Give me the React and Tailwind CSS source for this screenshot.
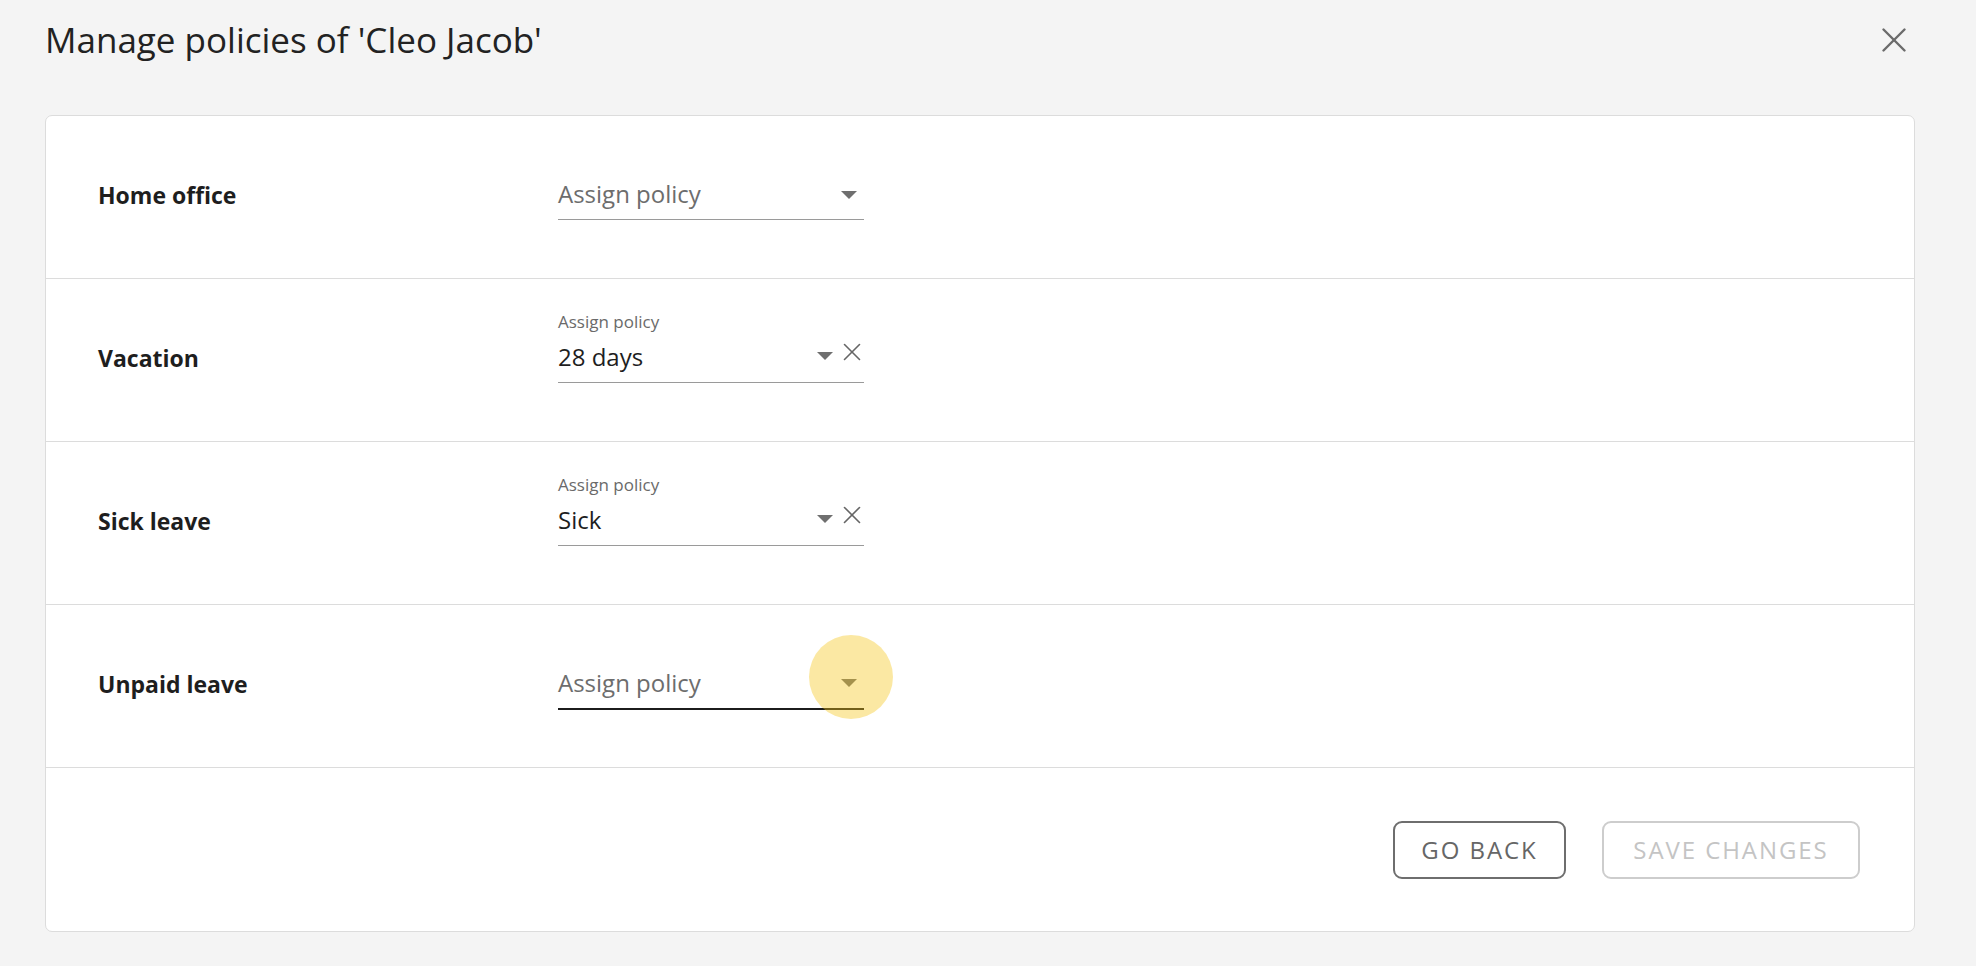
import { X } from 'lucide-react'

const rows = [
  { id: 'home', label: 'Home office', value: '' },
  { id: 'vacation', label: 'Vacation', value: '28 days' },
  { id: 'sick', label: 'Sick leave', value: 'Sick' },
  { id: 'unpaid', label: 'Unpaid leave', value: '', focused: true },
]

function Caret({ className = '' }) {
  return (
    <svg width="16" height="8" viewBox="0 0 16 8" className={className}>
      <path d="M0 0 L16 0 L8 8 Z" fill="#6f6f6f" />
    </svg>
  )
}

function PolicySelect({ value, focused }) {
  return (
    <div
      className={`relative w-[306px] mt-[3px] ${focused ? 'border-b-2 border-[#1c1c1c]' : 'border-b border-[#9a9a9a]'}`}
    >
      {value && (
        <div className="absolute left-0 -top-[30px] text-[17px] leading-[24px] text-[#6a6a6a]">
          Assign policy
        </div>
      )}
      <div className="flex items-center h-[34px] mb-[8px]">
        <div className={`flex-1 text-[24px] leading-[34px] ${value ? 'text-[#1e1e1e]' : 'text-[#6d6d6d]'}`}>
          {value || 'Assign policy'}
        </div>
        {value ? (
          <div className="flex items-center gap-[4px] -mr-[3px]">
            <Caret className="mt-[-2px]" />
            <X size={30} strokeWidth={1.3} className="text-[#666] -mt-[10px]" />
          </div>
        ) : (
          <Caret className="mr-[7px] mt-[1px]" />
        )}
      </div>
      {focused && (
        <div className="absolute right-[-29px] top-[-31px] w-[84px] h-[84px] rounded-full bg-[#f5c518]/40" />
      )}
    </div>
  )
}

export default function App() {
  return (
    <div className="min-h-screen bg-[#f4f4f4] pl-[45px] pr-[61px] pb-[35px] font-['Open_Sans','Noto_Sans',sans-serif]">
      <div className="h-[80px] flex items-center justify-between">
        <h1 className="text-[35px] text-[#222] font-normal leading-none -mt-[2px]">
          Manage policies of 'Cleo Jacob'
        </h1>
        <button className="mr-[0px] text-[#6b6b6b]">
          <X size={42} strokeWidth={1.4} />
        </button>
      </div>

      <div className="mt-[35px] bg-white border border-[#dcdcdc] rounded-[7px]">
        {rows.map((row) => (
          <div key={row.id} className="h-[163px] border-b border-[#dcdcdc] flex items-center pl-[52px]">
            <div className="w-[460px] text-[23px] font-bold text-[#1e1e1e] -mt-[4px]">{row.label}</div>
            <PolicySelect value={row.value} focused={row.focused} />
          </div>
        ))}
        <div className="h-[163px] flex items-center justify-end gap-[36px] pr-[54px]">
          <button className="h-[58px] w-[173px] rounded-[9px] border-2 border-[#6e6e6e] text-[24px] tracking-[0.08em] text-[#666]">
            GO BACK
          </button>
          <button className="h-[58px] w-[258px] rounded-[9px] border-2 border-[#cdcdcd] text-[24px] tracking-[0.08em] text-[#c4c4c4]">
            SAVE CHANGES
          </button>
        </div>
      </div>
    </div>
  )
}
